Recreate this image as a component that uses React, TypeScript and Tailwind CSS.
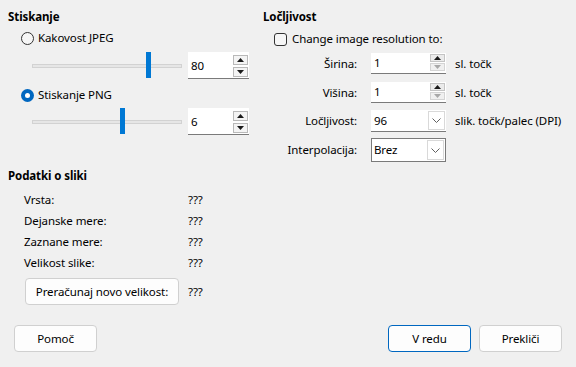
import React from "react";

const Arrow = ({ up, disabled }: { up?: boolean; disabled?: boolean }) => (
  <svg width="7" height="4" viewBox="0 0 7 4">
    <path d={up ? "M0 4 L3.5 0 L7 4 Z" : "M0 0 L3.5 4 L7 0 Z"} fill={disabled ? "#a8a8a8" : "#1a1a1a"} />
  </svg>
);

const Chevron = () => (
  <svg width="9" height="5" viewBox="0 0 9 5">
    <path d="M0.5 0.5 L4.5 4.5 L8.5 0.5" fill="none" stroke="#606060" strokeWidth="1" />
  </svg>
);

// big spin box for the compression values
const SpinLarge = ({ value }: { value: string }) => (
  <div className="ml-[6px] flex h-[27px] w-[61px] bg-white border-b border-[#7a7a7a]">
    <span className="flex flex-1 items-center pl-[3px] pt-[2px]">{value}</span>
    <div className="flex flex-col gap-[2px] pr-[1px] pt-[3px]">
      <div className="flex h-[10px] w-[15px] items-center justify-center border border-[#b9b9b9] bg-[#f4f4f4]">
        <Arrow up />
      </div>
      <div className="flex h-[10px] w-[15px] items-center justify-center border border-[#b9b9b9] bg-[#f4f4f4]">
        <Arrow />
      </div>
    </div>
  </div>
);

const SpinSmall = ({ value }: { value: string }) => (
  <div className="flex h-[21px] w-[75px] bg-white border-b border-[#7a7a7a]">
    <span className="flex flex-1 items-center pl-[3px]">{value}</span>
    <div className="flex flex-col gap-[1px] pr-[1px] pt-[1px]">
      <div className="flex h-[8px] w-[15px] items-center justify-center border border-[#c4c4c4] bg-[#ebebeb]">
        <Arrow up />
      </div>
      <div className="flex h-[8px] w-[15px] items-center justify-center border border-[#d4d4d4] bg-[#f0f0f0]">
        <Arrow disabled />
      </div>
    </div>
  </div>
);

const Slider = ({ pos }: { pos: number }) => (
  <div className="relative ml-[32px] flex h-[27px] w-[150px] items-center">
    <div className="h-[4px] w-full border border-[#d2d2d2] bg-[#e6e6e6]" />
    <div className="absolute top-0 h-[26px] w-[5px] bg-[#0078d4]" style={{ left: pos }} />
  </div>
);

const Button = ({ label, primary }: { label: string; primary?: boolean }) => (
  <div
    className={
      primary
        ? "flex h-[27px] w-[83px] items-center justify-center rounded-[4px] border border-[#0067c0] bg-[#fdfdfd]"
        : "flex h-[27px] w-[83px] items-center justify-center rounded-[4px] border border-[#d0d0d0] bg-[#fdfdfd]"
    }
  >
    {label}
  </div>
);

const info = ["Vrsta:", "Dejanske mere:", "Zaznane mere:", "Velikost slike:"];

export default function App() {
  return (
    <div className="flex h-[367px] w-[576px] flex-col bg-[#f0f0f0] font-['Noto_Sans',sans-serif] text-[11.5px] leading-[16px] tracking-[-0.1px] text-black">
      <div className="flex pt-[9px]">
        {/* Stiskanje + Podatki o sliki */}
        <div className="flex w-[255px] flex-col">
          <div className="h-[16px] pl-[8px] font-bold">Stiskanje</div>
          <div className="mt-[5px] flex h-[16px] items-center pl-[21px]">
            <div className="h-[13px] w-[13px] rounded-full border border-[#333333] bg-[#f6f6f6]" />
            <span className="ml-[4px]">Kakovost JPEG</span>
          </div>
          <div className="mt-[6px] flex items-center">
            <Slider pos={114} />
            <SpinLarge value="80" />
          </div>
          <div className="mt-[8px] flex h-[16px] items-center pl-[21px]">
            <div className="flex h-[13px] w-[13px] items-center justify-center rounded-full bg-[#0067c0]">
              <div className="h-[5px] w-[5px] rounded-full bg-white" />
            </div>
            <span className="ml-[4px]">Stiskanje PNG</span>
          </div>
          <div className="mt-[5px] flex items-center">
            <Slider pos={88} />
            <SpinLarge value="6" />
          </div>

          <div className="mt-[33px] h-[16px] pl-[8px] font-bold">Podatki o sliki</div>
          <div className="mt-[5px] flex flex-col">
            {info.map((l) => (
              <div key={l} className="flex h-[21px] items-center">
                <span className="w-[188px] pl-[24px]">{l}</span>
                <span>???</span>
              </div>
            ))}
          </div>
          <div className="mt-[5px] flex items-center">
            <div className="ml-[25px] flex h-[27px] w-[154px] items-center justify-center rounded-[4px] border border-[#d0d0d0] bg-[#fdfdfd]">
              Preračunaj novo velikost:
            </div>
            <span className="ml-[9px]">???</span>
          </div>
        </div>

        {/* Ločljivost */}
        <div className="flex flex-1 flex-col">
          <div className="h-[16px] pl-[8px] font-bold">Ločljivost</div>
          <div className="mt-[6px] flex h-[16px] items-center pl-[19px]">
            <div className="h-[13px] w-[13px] rounded-[3px] border border-[#333333] bg-[#f6f6f6]" />
            <span className="ml-[5px]">Change image resolution to:</span>
          </div>

          <div className="mt-[6px] flex h-[21px] items-center">
            <span className="w-[102px] text-right">Širina:</span>
            <div className="ml-[14px]">
              <SpinSmall value="1" />
            </div>
            <span className="ml-[9px]">sl. točk</span>
          </div>
          <div className="mt-[8px] flex h-[21px] items-center">
            <span className="w-[102px] text-right">Višina:</span>
            <div className="ml-[14px]">
              <SpinSmall value="1" />
            </div>
            <span className="ml-[9px]">sl. točk</span>
          </div>
          <div className="mt-[7px] flex h-[22px] items-center">
            <span className="w-[102px] text-right">Ločljivost:</span>
            <div className="ml-[14px] flex h-[22px] w-[75px] bg-white border-b border-[#7a7a7a]">
              <span className="flex flex-1 items-center pl-[3px]">96</span>
              <div className="my-[1px] mr-[1px] flex w-[17px] items-center justify-center border border-[#d9d9d9]">
                <Chevron />
              </div>
            </div>
            <span className="ml-[9px]">slik. točk/palec (DPI)</span>
          </div>
          <div className="mt-[6px] flex h-[24px] items-center">
            <span className="w-[102px] text-right">Interpolacija:</span>
            <div className="ml-[14px] flex h-[24px] w-[75px] border border-[#7a7a7a] bg-white">
              <span className="flex flex-1 items-center pl-[2px]">Brez</span>
              <div className="m-[1px] flex w-[17px] items-center justify-center border border-[#d9d9d9]">
                <Chevron />
              </div>
            </div>
          </div>
        </div>
      </div>

      <div className="mb-[15px] mt-auto flex justify-between px-[14px]">
        <Button label="Pomoč" />
        <div className="flex gap-[8px]">
          <Button label="V redu" primary />
          <Button label="Prekliči" />
        </div>
      </div>
    </div>
  );
}
